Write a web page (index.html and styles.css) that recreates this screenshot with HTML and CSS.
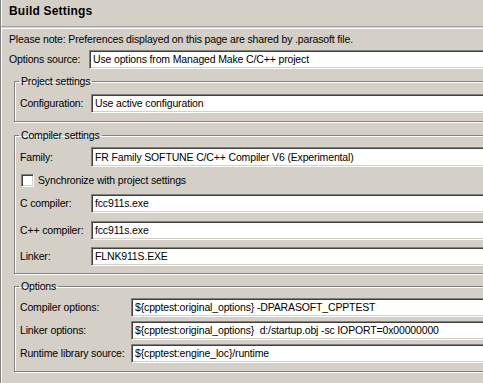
FILE: index.html
```html
<!DOCTYPE html>
<html>
<head>
<meta charset="utf-8">
<link rel="stylesheet" href="styles.css">
</head>
<body>
<div class="page">
  <div class="header"><div class="title">Build Settings</div></div>
  <div class="sep"></div>
  <div class="content">
    <div class="note">Please note: Preferences displayed on this page are shared by .parasoft file.</div>
    <div class="row row-top">
      <label class="lbl lbl-top">Options source:</label>
      <div class="field">Use options from Managed Make C/C++ project</div>
    </div>

    <fieldset class="group group-project">
      <legend>Project settings</legend>
      <div class="row">
        <label class="lbl lbl-mid">Configuration:</label>
        <div class="field">Use active configuration</div>
      </div>
    </fieldset>

    <fieldset class="group group-compiler">
      <legend>Compiler settings</legend>
      <div class="row row-family">
        <label class="lbl lbl-mid">Family:</label>
        <div class="field field-combo">FR Family SOFTUNE C/C++ Compiler V6 (Experimental)</div>
      </div>
      <div class="check-row">
        <span class="checkbox"></span>
        <span class="check-label">Synchronize with project settings</span>
      </div>
      <div class="row gap7">
        <label class="lbl lbl-mid">C compiler:</label>
        <div class="field">fcc911s.exe</div>
      </div>
      <div class="row gap8">
        <label class="lbl lbl-mid">C++ compiler:</label>
        <div class="field">fcc911s.exe</div>
      </div>
      <div class="row gap7">
        <label class="lbl lbl-mid">Linker:</label>
        <div class="field">FLNK911S.EXE</div>
      </div>
    </fieldset>

    <fieldset class="group group-options">
      <legend>Options</legend>
      <div class="row">
        <label class="lbl lbl-wide">Compiler options:</label>
        <div class="field">${cpptest:original_options} -DPARASOFT_CPPTEST</div>
      </div>
      <div class="row gap4">
        <label class="lbl lbl-wide">Linker options:</label>
        <div class="field">${cpptest:original_options}&nbsp; d:/startup.obj -sc IOPORT=0x00000000</div>
      </div>
      <div class="row gap4">
        <label class="lbl lbl-wide">Runtime library source:</label>
        <div class="field">${cpptest:engine_loc}/runtime</div>
      </div>
    </fieldset>
  </div>
</div>
</body>
</html>
```
FILE: styles.css
```css
html, body {
  margin: 0;
  padding: 0;
  background: #d4d0c8;
  overflow: hidden;
}
body {
  width: 483px;
  height: 383px;
  font-family: "Liberation Sans", Arial, sans-serif;
  font-size: 10.5px;
  letter-spacing: -0.15px;
  line-height: 13px;
  color: #000;
}
.page {
  width: 580px;
  height: 383px;
  border-left: 1px solid #808080;
  box-shadow: inset 1px 0 0 #ffffff;
  box-sizing: border-box;
}
.header {
  height: 26px;
  box-sizing: border-box;
  padding: 4px 0 0 8px;
}
.title {
  font-size: 12px;
  letter-spacing: 0.2px;
  font-weight: bold;
  line-height: 15px;
}
.sep {
  height: 1px;
  border-top: 1px solid #a0a0a0;
  border-bottom: 1px solid #ffffff;
}
.content {
  padding: 4px 0 0 8px;
}
.note {
  height: 13px;
  white-space: nowrap;
}
.row {
  display: flex;
  align-items: center;
  height: 19px;
}
.row-top {
  margin-top: 4px;
}
.lbl {
  flex: none;
  white-space: nowrap;
}
.lbl-top { width: 80px; }
.lbl-mid { width: 71px; }
.lbl-wide { width: 111px; }
.field {
  flex: 1;
  height: 19px;
  box-sizing: border-box;
  background: #ffffff;
  border: 1px solid;
  border-color: #808080 #ffffff #ffffff #808080;
  box-shadow: inset 1px 1px 0 #404040, inset -1px -1px 0 #d4d0c8;
  padding: 0 0 0 3px;
  line-height: 17px;
  white-space: nowrap;
  overflow: hidden;
}
.row-family { height: 20px; }
.field-combo { height: 20px; line-height: 18px; }
.group {
  margin: 0 0 0 5px;
  padding: 0 0 0 5px;
  border: 1px solid #808080;
  box-shadow: inset 1px 1px 0 #ffffff, 1px 1px 0 #ffffff;
  min-inline-size: 0;
}
.group legend {
  padding: 0 2px;
  margin-left: -1px;
  line-height: 13px;
  height: 13px;
}
.group-project {
  margin-top: 6px;
  padding-top: 6px;
  padding-bottom: 8px;
}
.group-compiler {
  margin-top: 7px;
  padding-top: 5px;
  padding-bottom: 7px;
}
.group-options {
  margin-top: 6px;
  padding-top: 5px;
  padding-bottom: 8px;
}
.check-row {
  display: flex;
  align-items: center;
  height: 13px;
  margin-top: 7px;
}
.checkbox {
  flex: none;
  width: 13px;
  height: 13px;
  box-sizing: border-box;
  margin-left: 1px;
  background: #ffffff;
  border: 1px solid;
  border-color: #808080 #ffffff #ffffff #808080;
  box-shadow: inset 1px 1px 0 #404040, inset -1px -1px 0 #d4d0c8;
}
.check-label {
  margin-left: 4px;
  white-space: nowrap;
}
.gap7 { margin-top: 7px; }
.gap8 { margin-top: 8px; }
.gap4 { margin-top: 4px; }
```
